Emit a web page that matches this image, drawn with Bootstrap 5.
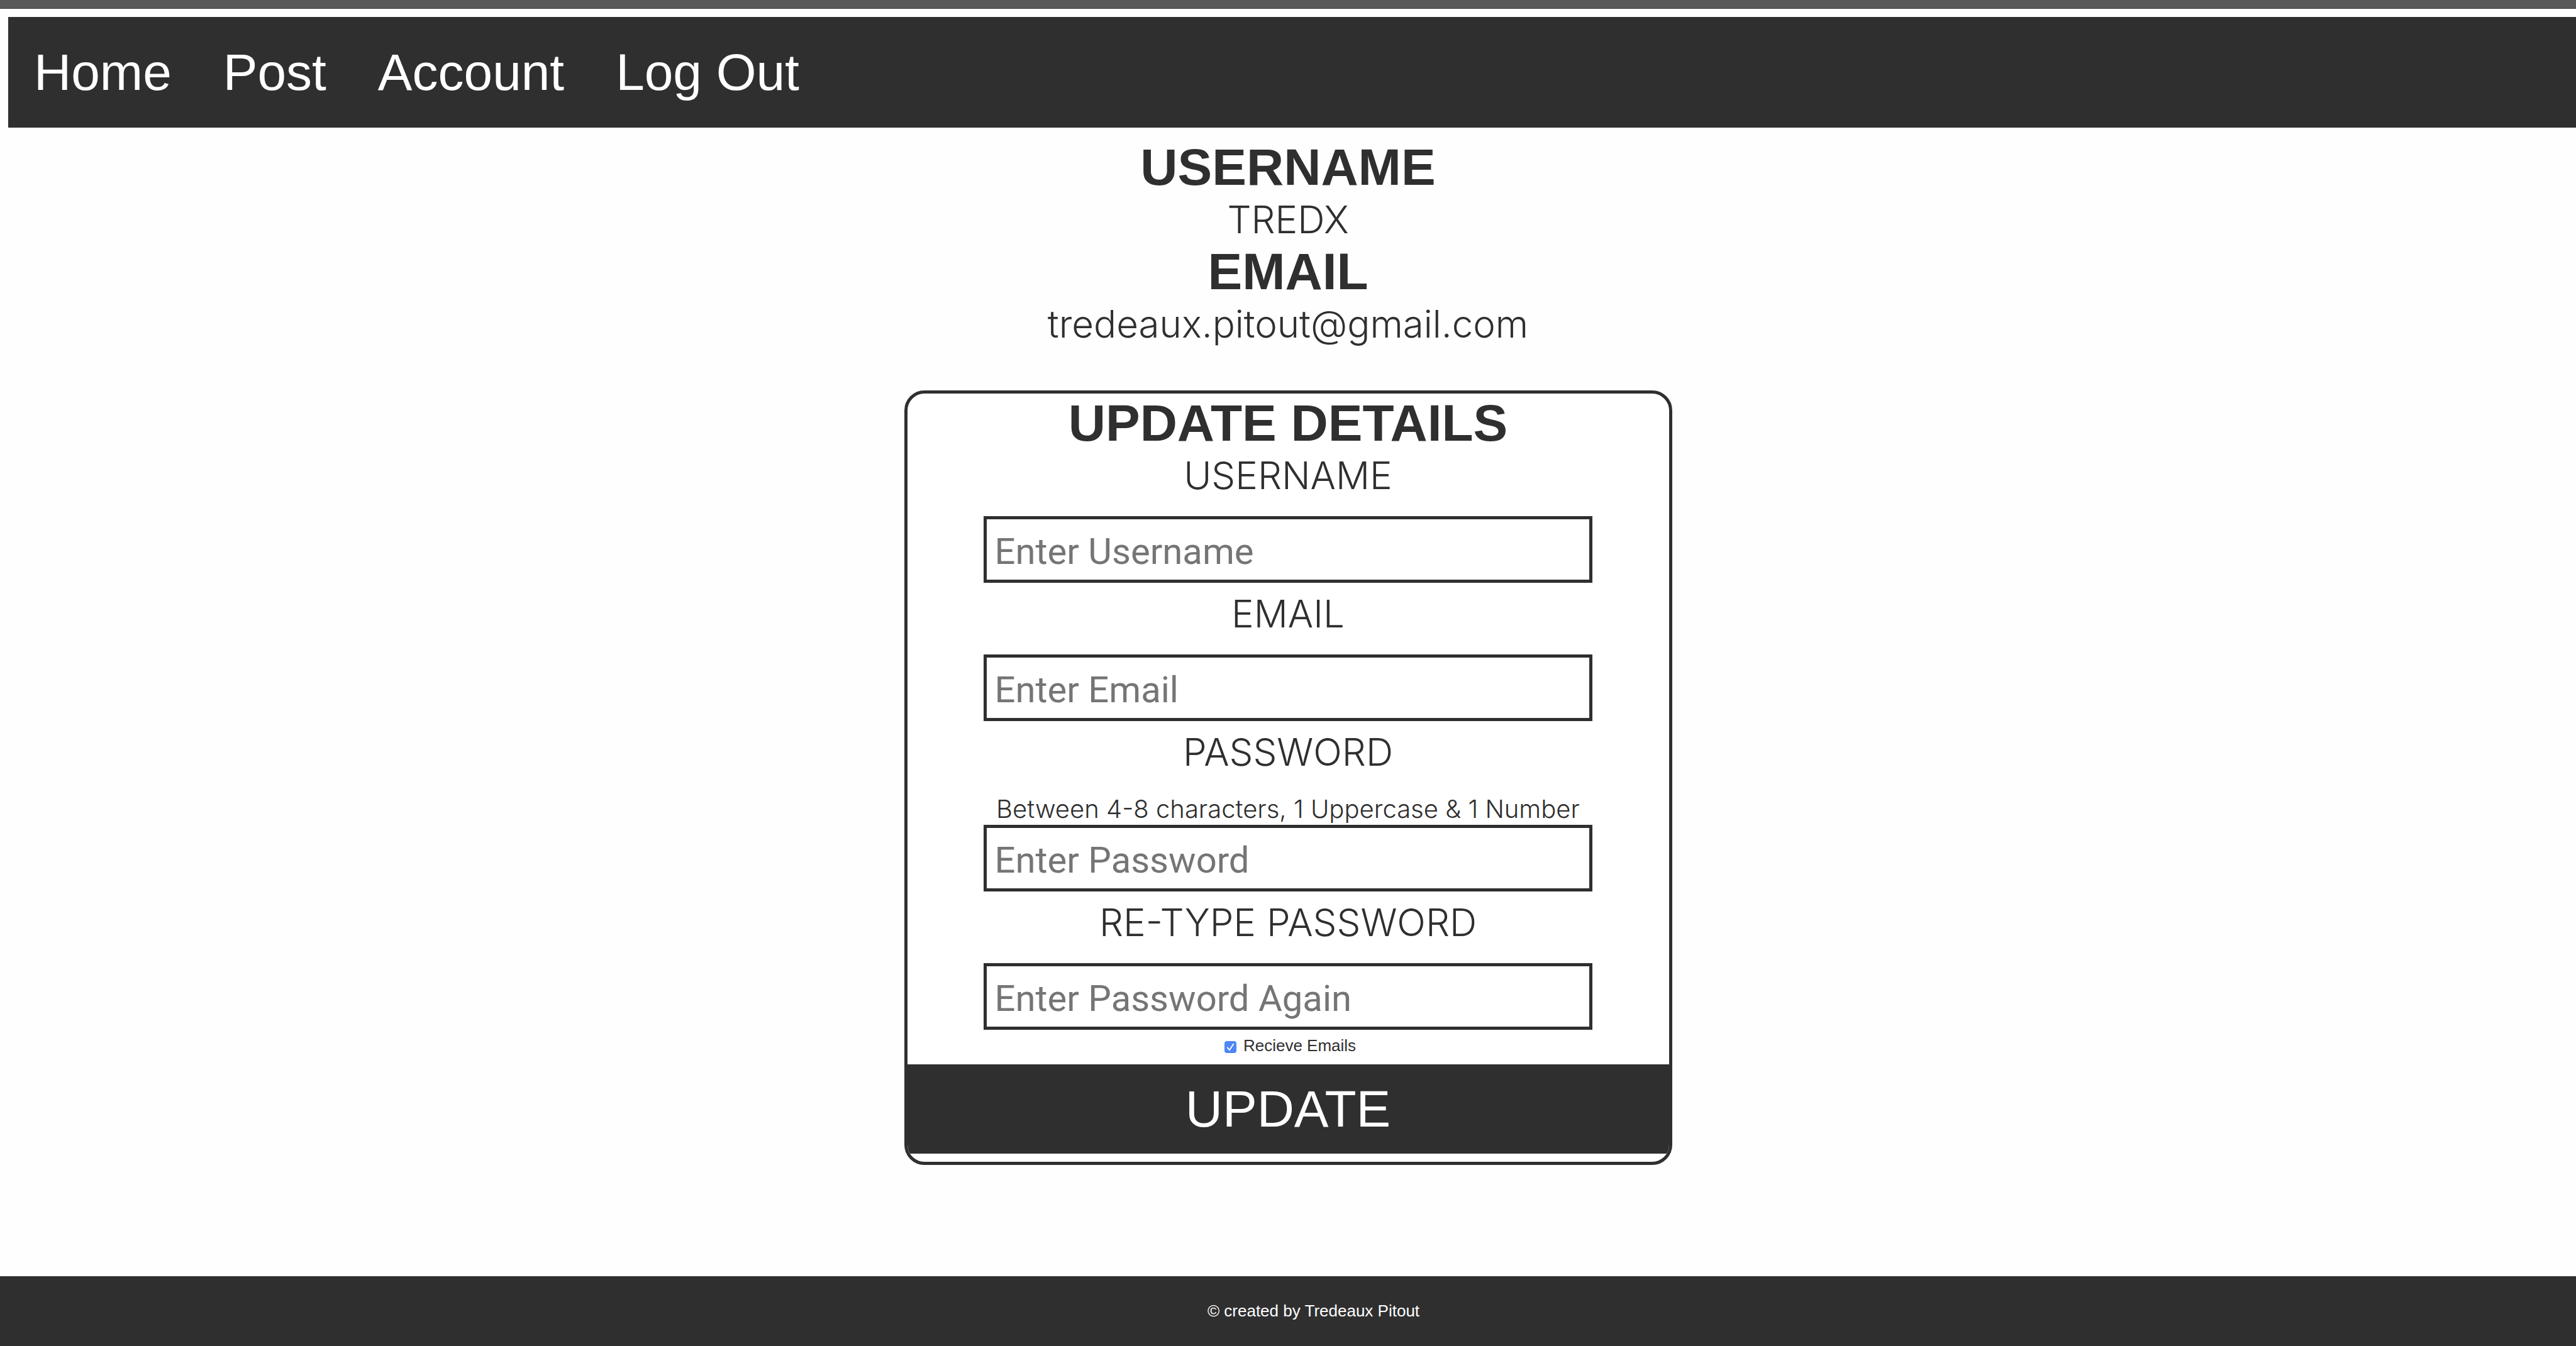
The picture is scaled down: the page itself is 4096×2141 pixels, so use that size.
<!DOCTYPE html>
<html lang="en">
<head>
<meta charset="utf-8">
<meta name="viewport" content="width=device-width, initial-scale=1">
<title>Account</title>
<link href="https://cdn.jsdelivr.net/npm/bootstrap@5.3.0/dist/css/bootstrap.min.css" rel="stylesheet">
<style>
  :root { --ink: #2f2f2f; }
  body { background: #fefefe; color: var(--ink); font-family: "Liberation Sans", Arial, sans-serif; font-size: 26px; line-height: 30px; }
  .top-strip { height: 14px; background: #595959; border-bottom: 1px solid #3c3c3c; }
  .site-nav { margin: 13px 0 0 13px; background: var(--ink); }
  .site-nav .nav-link { color: #fff; font-size: 82px; line-height: 96px; padding: 40px 41px; }
  .page-main { padding: 16px 13px 0; }
  .section-title { font-size: 82px; line-height: 94px; font-weight: 700; }
  .light-text { font-family: Inter, "Liberation Sans", sans-serif; font-weight: 300; font-size: 60px; line-height: 72px; }
  .hint-text { font-family: Inter, "Liberation Sans", sans-serif; font-weight: 300; font-size: 40px; line-height: 51px; }
  .update-card { width: 30%; margin-top: 70px; border: 5px solid var(--ink); border-radius: 32px; background: #fff; overflow: hidden; padding-bottom: 13px; }
  .field-box { width: 80%; }
  .field-box .form-control { height: 106px; margin-bottom: 13px; border: 5px solid var(--ink); border-radius: 0; background: #fff; padding: 6px 13px 0; font-family: Roboto, "Liberation Sans", sans-serif; font-size: 58px; line-height: 72px; }
  .field-box .form-control:last-child { margin-bottom: 0; }
  .field-box .form-control::placeholder { color: #757575; opacity: 1; }
  .field-label { margin-bottom: 29px; }
  .mail-option { height: 55px; gap: 11px; padding: 0 0 5px 7px; }
  .mail-option .form-check-input { width: 19px; height: 19px; margin: 5px 0 0; border: 0; border-radius: 4px; }
  .mail-option .form-check-input:checked { background-color: #4f86f5; background-image: url("data:image/svg+xml,%3csvg xmlns='http://www.w3.org/2000/svg' viewBox='0 0 24 24'%3e%3cpath fill='none' stroke='%23fff' stroke-width='2.4' stroke-linecap='round' stroke-linejoin='round' d='M6 13l4 5L18 6'/%3e%3c/svg%3e"); }
  .update-button { background: var(--ink); color: #fff; border: 0; border-radius: 0; font-size: 82px; line-height: 96px; padding: 23px 0; }
  .site-footer { background: var(--ink); color: #fff; padding: 40px 0 41px 81px; }
</style>
</head>
<body class="d-flex flex-column min-vh-100">
<div class="top-strip"></div>
<nav class="site-nav">
  <ul class="nav">
    <li class="nav-item"><a class="nav-link" href="#">Home</a></li>
    <li class="nav-item"><a class="nav-link" href="#">Post</a></li>
    <li class="nav-item"><a class="nav-link" href="#">Account</a></li>
    <li class="nav-item"><a class="nav-link" href="#">Log Out</a></li>
  </ul>
</nav>
<main class="page-main d-flex flex-column align-items-center text-center">
  <section>
    <h1 class="section-title m-0">USERNAME</h1>
    <p class="light-text m-0">TREDX</p>
    <h1 class="section-title m-0">EMAIL</h1>
    <p class="light-text m-0">tredeaux.pitout@gmail.com</p>
  </section>
  <form class="update-card">
    <h1 class="section-title m-0">UPDATE DETAILS</h1>
    <div class="field-box mx-auto">
      <label class="light-text field-label d-block" for="username">USERNAME</label>
      <input class="form-control" id="username" type="text" placeholder="Enter Username">
      <label class="light-text field-label d-block" for="email">EMAIL</label>
      <input class="form-control" id="email" type="email" placeholder="Enter Email">
      <label class="light-text field-label d-block" for="password">PASSWORD</label>
      <p class="hint-text m-0 text-nowrap">Between 4-8 characters, 1 Uppercase &amp; 1 Number</p>
      <input class="form-control" id="password" type="password" placeholder="Enter Password">
      <label class="light-text field-label d-block" for="password2">RE-TYPE PASSWORD</label>
      <input class="form-control" id="password2" type="password" placeholder="Enter Password Again">
    </div>
    <div class="mail-option d-flex justify-content-center align-items-center">
      <input class="form-check-input" type="checkbox" id="mails" checked>
      <label for="mails">Recieve Emails</label>
    </div>
    <button class="update-button btn w-100 d-block" type="button">UPDATE</button>
  </form>
</main>
<footer class="site-footer text-center mt-auto">© created by Tredeaux Pitout</footer>
<script src="https://cdn.jsdelivr.net/npm/bootstrap@5.3.0/dist/js/bootstrap.bundle.min.js"></script>
</body>
</html>
